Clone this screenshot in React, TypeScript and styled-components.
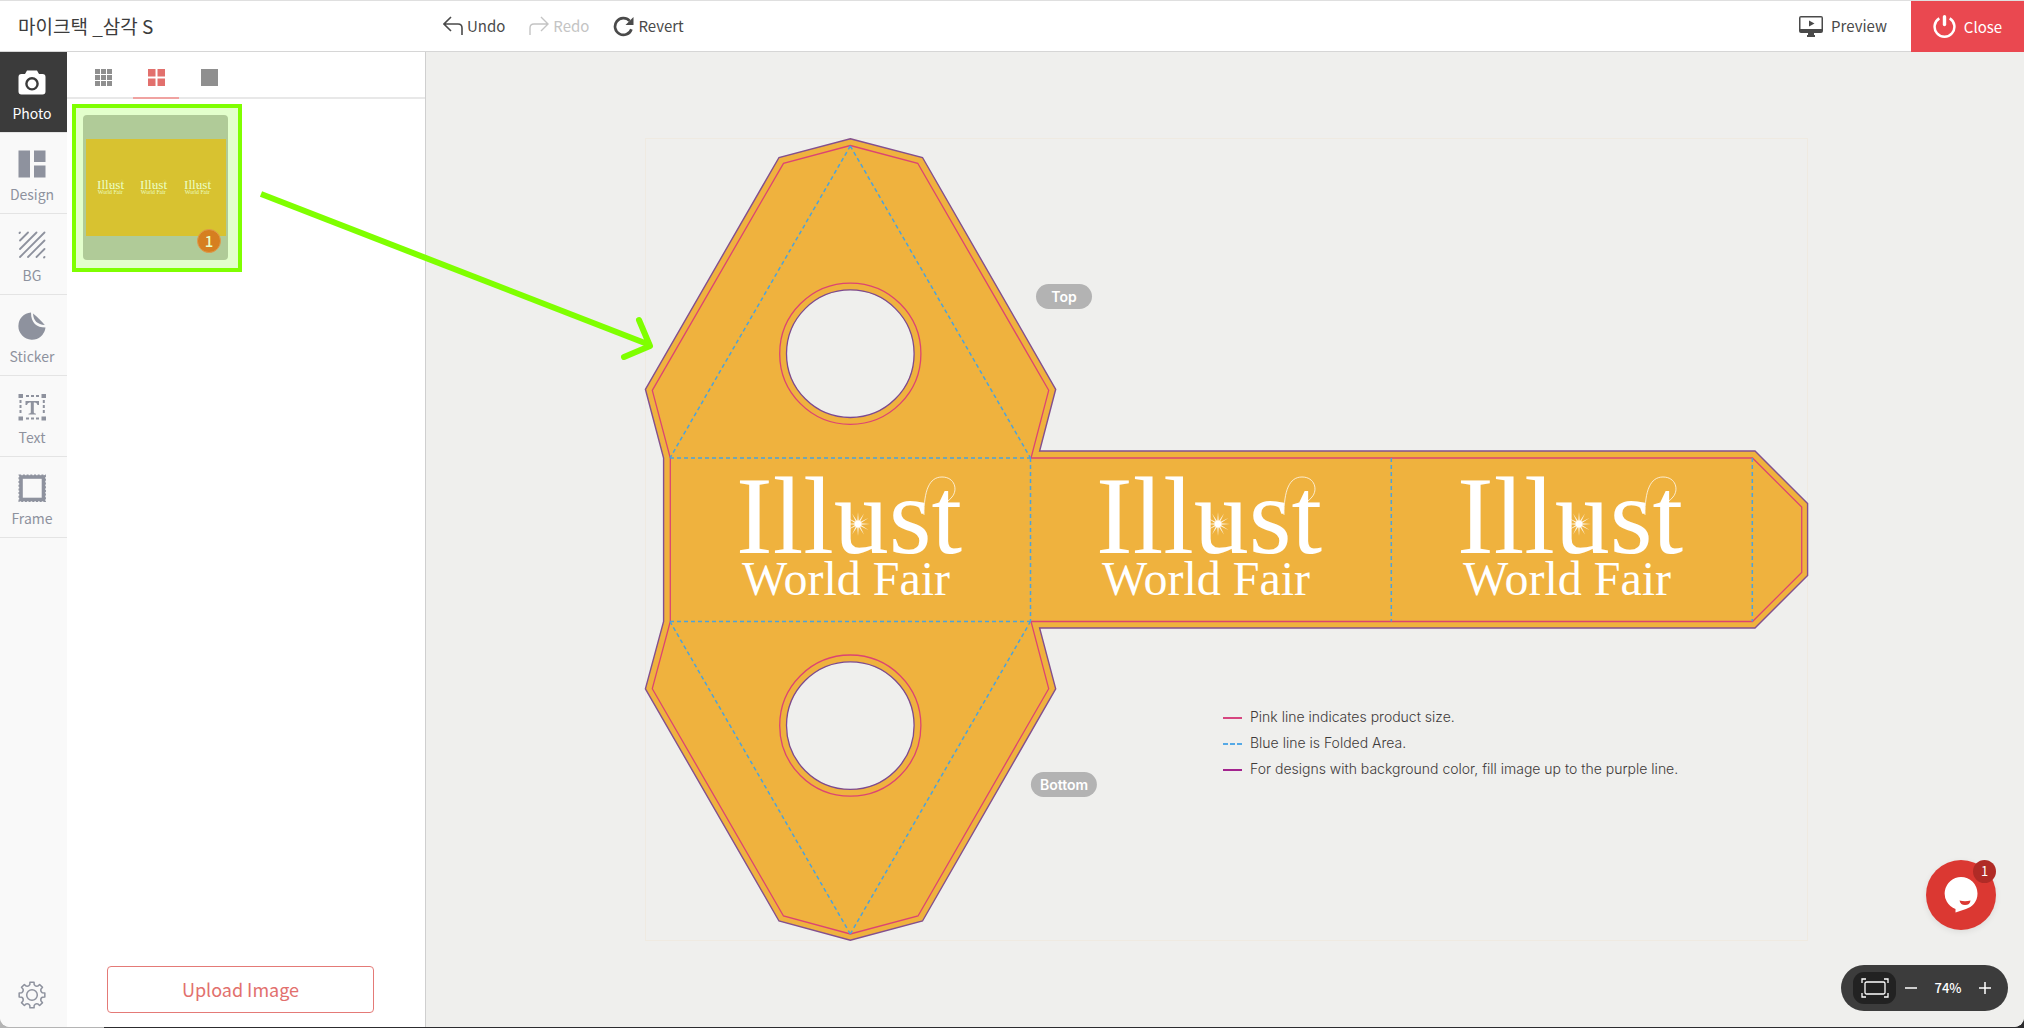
import React from "react";
import styled, { createGlobalStyle } from "styled-components";

const GlobalStyle = createGlobalStyle`
  *, *::before, *::after { box-sizing: border-box; }
  body {
    margin: 0;
    background: linear-gradient(to right, #b4b4b4 104px, #2c2c2e 104px);
    font-family: "Noto Sans CJK KR", "Noto Sans", sans-serif;
  }
  button { font: inherit; border: 0; padding: 0; background: none; cursor: pointer; color: inherit; }
  svg { display: block; flex: none; }
`;

const Window = styled.div`
  display: flex;
  flex-direction: column;
  height: 100vh;
  border-bottom: 1px solid transparent;
  background: #fff;
  background-clip: padding-box;
  border-radius: 0 0 10px 10px;
  overflow: hidden;
`;

const Header = styled.header`
  display: flex;
  align-items: stretch;
  flex: none;
  height: 52px;
  border-top: 1px solid #dfdfdf;
  border-bottom: 1px solid #d6d6d6;
  background: #fff;
  color: #4a4a4a;
  font-size: 15px;
  line-height: 24px;
`;

const Title = styled.h1`
  width: 443px;
  margin: 0;
  padding-left: 18px;
  align-self: center;
  font-size: 19px;
  font-weight: 400;
  line-height: 24px;
  color: #3c3c3c;
`;

const History = styled.div`
  display: flex;
  gap: 24px;
  flex: 1;
`;

const ToolButton = styled.button<{ $gap?: number }>`
  display: flex;
  align-items: center;
  gap: ${(p) => p.$gap ?? 4}px;
  &:disabled { color: #c4c4c4; cursor: default; }
`;

const PreviewButton = styled(ToolButton)`
  padding-right: 24px;
`;

const CloseButton = styled(ToolButton)`
  width: 113px;
  margin-bottom: -1px;
  justify-content: center;
  background: #ea4850;
  color: #fff;
`;

const Body = styled.div`
  display: flex;
  flex: 1;
  min-height: 0;
`;

const Rail = styled.nav`
  display: flex;
  flex-direction: column;
  flex: none;
  width: 67px;
  background: #f9f9f9;
  color: #8e929e;
`;

const RailItem = styled.button<{ $active?: boolean }>`
  display: flex;
  flex-direction: column;
  align-items: center;
  gap: 4px;
  height: 81px;
  padding: 17px 3px 0 0;
  border-bottom: 1px solid #e4e4e4;
  font-size: 14px;
  line-height: 24px;
  background: ${(p) => (p.$active ? "#3b3b3b" : "transparent")};
  color: ${(p) => (p.$active ? "#fff" : "inherit")};
`;

const SettingsButton = styled.button`
  display: flex;
  justify-content: center;
  margin-top: auto;
  padding: 0 3px 18px 0;
`;

const Panel = styled.aside`
  display: flex;
  flex-direction: column;
  flex: none;
  width: 359px;
  border-right: 1px solid #cfcfcf;
  background: #fff;
`;

const Tabs = styled.div`
  display: flex;
  flex: none;
  gap: 7px;
  height: 47px;
  padding-left: 13px;
  border-bottom: 2px solid #e8e8e8;
`;

const Tab = styled.button<{ $active?: boolean }>`
  display: flex;
  justify-content: center;
  align-items: center;
  width: 46px;
  margin-bottom: -2px;
  padding-top: 8px;
  padding-bottom: 2px;
  border-bottom: 2px solid ${(p) => (p.$active ? "#f0a3a1" : "transparent")};
  color: ${(p) => (p.$active ? "#e2706d" : "#8f8f8f")};
`;

const Photos = styled.div`
  flex: 1;
  padding: 5px;
`;

const Highlight = styled.div`
  width: 170px;
  height: 168px;
  padding: 7px 10px 8px 7px;
  border: 4px solid #7fff00;
  background: #e3ffcc;
`;

const Thumb = styled.button`
  position: relative;
  display: flex;
  align-items: center;
  justify-content: center;
  width: 145px;
  height: 145px;
  border-radius: 4px;
  background: #b0cb98;
`;

const UseCount = styled.span`
  position: absolute;
  right: 7px;
  bottom: 7px;
  width: 24px;
  height: 24px;
  border: 1px solid #e09a4c;
  border-radius: 50%;
  background: #d67f20;
  color: #eaffc8;
  font-size: 15px;
  font-weight: 500;
  line-height: 21px;
  text-align: center;
`;

const UploadArea = styled.div`
  display: flex;
  padding: 0 51px 14px 40px;
`;

const UploadButton = styled.button`
  flex: 1;
  height: 47px;
  padding-bottom: 2px;
  border: 1px solid #e47a77;
  border-radius: 4px;
  color: #e2706d;
  font-size: 18px;
  line-height: 24px;
`;

const Workspace = styled.main`
  position: relative;
  display: flex;
  flex: 1;
  min-width: 0;
  align-items: center;
  justify-content: center;
  background: #efefed;
`;

const Artboard = styled.div`
  position: relative;
  flex: none;
  > svg { overflow: visible; }
`;

const SideLabel = styled.span<{ $x: number; $y: number }>`
  position: absolute;
  left: ${(p) => p.$x}px;
  top: ${(p) => p.$y}px;
  transform: translateX(-50%);
  min-width: 56px;
  padding: 0 9px;
  border-radius: 13px;
  background: #b3b3b3;
  color: #fff;
  font: 600 14px/25px Inter, sans-serif;
  text-align: center;
`;

const Legend = styled.ul`
  position: absolute;
  left: 581px;
  top: 567px;
  margin: 0;
  padding: 0;
  list-style: none;
  white-space: nowrap;
  color: #3e3a39;
  font: 300 14px/26px Inter, sans-serif;
`;

const LegendRow = styled.li`
  display: flex;
  align-items: center;
  gap: 8px;
`;

const ArrowLayer = styled.svg`
  position: absolute;
  left: -166px;
  top: 136px;
  z-index: 2;
  pointer-events: none;
`;

const Floating = styled.div`
  position: absolute;
  right: 16px;
  bottom: 16px;
  display: flex;
  flex-direction: column;
  align-items: flex-end;
  gap: 35px;
`;

const ChatButton = styled.button`
  position: relative;
  display: flex;
  align-items: center;
  justify-content: center;
  width: 70px;
  height: 70px;
  margin-right: 12px;
  border-radius: 50%;
  background: #db3832;
  box-shadow: 0 2px 6px rgba(0, 0, 0, 0.08);
`;

const ChatCount = styled.span`
  position: absolute;
  top: 0;
  right: 0;
  width: 23px;
  height: 23px;
  border-radius: 50%;
  background: #b02b26;
  color: #fff;
  font-size: 13px;
  line-height: 21px;
`;

const ZoomBar = styled.div`
  display: flex;
  align-items: center;
  width: 167px;
  height: 46px;
  padding: 0 8px 0 12px;
  border-radius: 23px;
  background: #3c3c3c;
  color: #fff;
  font-size: 13px;
  font-weight: 500;
  line-height: 20px;
`;

const FitButton = styled.button`
  display: flex;
  align-items: center;
  justify-content: center;
  width: 43px;
  height: 32px;
  border-radius: 11px;
  background: #222;
`;

const ZoomStep = styled.button`
  display: flex;
  align-items: center;
  justify-content: center;
  width: 30px;
  height: 32px;
`;

const ZoomValue = styled.output`
  flex: 1;
  text-align: center;
`;

const RAYS = [0, 30, 60, 90, 120, 150, 180, 210, 240, 270, 300, 330];

/* One lettering block; its origin is the left end of the "Illust" baseline. */
function Lettering({ x, y, scale = 1, color = "#fff" }: { x: number; y: number; scale?: number; color?: string }) {
  return (
    <g transform={`translate(${x} ${y}) scale(${scale})`} fill={color} fontFamily="'Liberation Serif', serif">
      <text fontSize="110">
        Illust
        <tspan x="6" y="42" fontSize="48">World Fair</tspan>
      </text>
      <g transform="translate(122 -29)">
        {RAYS.map((a) => (
          <path key={a} d="M-1 0L0 -12L1 0Z" transform={`rotate(${a})`} opacity=".85" />
        ))}
        <circle r="3.4" />
      </g>
      <path d="M188 -38C188 -62 193 -76 206 -76C219 -76 222 -63 216 -56C213 -52 209 -50 204 -49" fill="none" stroke={color} strokeWidth="1" opacity=".75" />
    </g>
  );
}

const CUT =
  "M850.3 145.5L917.7 163.3L1048.7 390.3L1031 458H1752.5L1801.7 507V572.5L1752.5 621.5H1031L1048.7 688.7L918 916L850.3 934L783.5 916L652.3 688.7L670.3 621.5V458L652.3 390.3L783.5 163.3Z";
const BLEED =
  "M850.3 138.7L922.5 157.5L1055.7 389.3L1039.6 451H1755L1807.6 503.6V575.4L1755 628H1039.6L1055.7 688.8L922.5 921L850.3 940.3L779 921L645.4 688.8L663.6 621.5V458L645.4 389.3L779 157.5Z";
const FOLDS = "M850.3 146L670 458M850.3 146L1030.5 458M670 458H1030.5M670 621.5H1030.5M850.3 934L670 621.5M850.3 934L1030.5 621.5M1030.5 458V621.5M1391.3 458V621.5M1752.3 458V621.5";

function Dieline() {
  return (
    <svg width="1166" height="806" viewBox="642 137 1166 806" role="img" aria-label="Mic tag template">
      <rect x="645.5" y="138.5" width="1162" height="802" fill="none" stroke="#efeae1" />
      <path d={BLEED} fill="#efb23e" stroke="#83508f" strokeWidth="1.4" />
      {[353.7, 725.6].map((cy) => (
        <g key={cy} fill="none" strokeWidth="1.3">
          <circle cx="850.3" cy={cy} r="70.6" stroke="#dc4472" />
          <circle cx="850.3" cy={cy} r="63.8" fill="#efefed" stroke="#7d4a90" />
        </g>
      ))}
      <path d={CUT} fill="none" stroke="#dc4472" strokeWidth="1.3" />
      <path d={FOLDS} fill="none" stroke="#4ba3dc" strokeWidth="1.5" strokeDasharray="4 3" />
      {[736, 1096, 1457].map((x) => (
        <Lettering key={x} x={x} y={553} />
      ))}
    </svg>
  );
}

function PhotoArt() {
  return (
    <svg width="140" height="97" viewBox="0 0 140 97" role="img" aria-label="Illust World Fair artwork">
      <rect width="140" height="97" fill="#d8c230" />
      {[11, 54, 98].map((x) => (
        <Lettering key={x} x={x} y={50} scale={0.12} color="#ebffc4" />
      ))}
    </svg>
  );
}

const UndoIcon = () => (
  <svg width="20" height="20" viewBox="0 0 20 20" fill="none" stroke="currentColor" strokeWidth="1.6">
    <path d="M8 1L1 8L8 15M1 8H15Q19 8 19 12V19" />
  </svg>
);
const RedoIcon = () => (
  <svg width="20" height="20" viewBox="0 0 20 20" fill="none" stroke="currentColor" strokeWidth="1.4">
    <path d="M12 1L19 8L12 15M19 8H5Q1 8 1 12V19" />
  </svg>
);
const RevertIcon = () => (
  <svg width="21" height="21" viewBox="0 0 21 21" fill="none">
    <path d="M18.4 13.2A8.4 8.4 0 1 1 16.6 4.8" stroke="currentColor" strokeWidth="2.7" />
    <path d="M20.5 1V9H12.5Z" fill="currentColor" />
  </svg>
);
const PreviewIcon = () => (
  <svg width="24" height="21" viewBox="0 0 24 21">
    <path fill="currentColor" fillRule="evenodd" d="M2 0H22Q24 0 24 2V15Q24 17 22 17H15V19H16V21H8V19H9V17H2Q0 17 0 15V2Q0 0 2 0ZM1.5 1.5V13H22.5V1.5Z" />
    <path d="M10 4.5L15.5 7.5L10 10.5Z" fill="currentColor" />
  </svg>
);
const PowerIcon = () => (
  <svg width="23" height="23" viewBox="0 0 23 23" fill="none" stroke="currentColor">
    <path d="M6.3 3.4A9.9 9.9 0 1 0 16.7 3.4" strokeWidth="2.5" />
    <path d="M11.5 1.8V9.6" strokeWidth="3.4" strokeLinecap="round" />
  </svg>
);

const railIcon = { width: 28, height: 28, viewBox: "0 0 28 28", fill: "currentColor" };
const CameraIcon = () => (
  <svg {...railIcon}>
    <path fillRule="evenodd" d="M9 1.5H19L21 5H24.5Q27.5 5 27.5 8V22.5Q27.5 25.5 24.5 25.5H3.5Q.5 25.5 .5 22.5V8Q.5 5 3.5 5H7ZM14 8A6.8 6.8 0 1 0 14 21.6A6.8 6.8 0 1 0 14 8ZM14 10.4A4.4 4.4 0 1 1 14 19.2A4.4 4.4 0 1 1 14 10.4Z" />
  </svg>
);
const DesignIcon = () => (
  <svg {...railIcon}>
    <path d="M.5 .5H12V27.5H.5ZM16 .5H27.5V12H16ZM16 15.5H27.5V27.5H16Z" />
  </svg>
);
const BgIcon = () => (
  <svg {...railIcon} stroke="currentColor" strokeWidth="1.8" strokeLinecap="round">
    <path d="M1.5 2L2 1.5M2 9.5L10 1.5M2 18L18.5 1.5M2 26L26.5 1.5M10 26L26.5 9.5M18.5 26L26.5 18M26 26.5L26.5 26" />
  </svg>
);
const StickerIcon = () => (
  <svg {...railIcon}>
    <path d="M13 .5A13.6 13.6 0 1 0 27.5 15.5C18.5 15.5 13 11 13 .5Z" />
    <path d="M15 1.5C19 4.5 23.5 9 26.8 13C19.5 12.5 15.5 9 15 1.5Z" />
  </svg>
);
const TextIcon = () => (
  <svg {...railIcon}>
    <path d="M.5 1H5V5H.5ZM23.5 1H28V5H23.5ZM.5 23.5H5V27.5H.5ZM23.5 23.5H28V27.5H23.5Z" />
    <path d="M8 3H21M8 25.5H21M2.5 7V22M25.8 7V22" fill="none" stroke="currentColor" strokeWidth="2" strokeDasharray="3 2" />
    <path d="M7.5 8H21V12H19.5Q19 9.5 17 9.5H15.8V19.5Q15.8 20.5 18 20.8V21.5H10.5V20.8Q12.8 20.5 12.8 19.5V9.5H11.5Q9.5 9.5 9 12H7.5Z" />
  </svg>
);
const FrameIcon = () => (
  <svg {...railIcon} fill="none" stroke="currentColor">
    <rect x="3" y="3" width="22.5" height="22.5" strokeWidth="3.6" />
    <rect x="1.2" y="1.2" width="26" height="26" strokeWidth="1.4" strokeDasharray="2 1.7" />
  </svg>
);

const GearIcon = () => {
  const teeth = [0, 45, 90, 135, 180, 225, 270, 315];
  const at = (deg: number, r: number) => {
    const a = ((deg - 90) * Math.PI) / 180;
    return `${(14 + r * Math.cos(a)).toFixed(2)} ${(14 + r * Math.sin(a)).toFixed(2)}`;
  };
  const d = teeth
    .map((t, i) => `${i ? "L" : "M"}${at(t - 12, 10.6)}L${at(t - 9, 13)}L${at(t + 9, 13)}L${at(t + 12, 10.6)}Q${at(t + 22.5, 9)} ${at(t + 33, 10.6)}`)
    .join("");
  return (
    <svg width="28" height="28" viewBox="0 0 28 28" fill="none" stroke="currentColor" strokeWidth="1.5" strokeLinejoin="round">
      <path d={`${d}Z`} />
      <circle cx="14" cy="14" r="5.3" />
    </svg>
  );
};

const GridIcon = ({ n }: { n: number }) => {
  const gap = n === 3 ? 1 : 2;
  const size = (17 - gap * (n - 1)) / n;
  const cells = Array.from({ length: n * n }, (_, i) => i);
  return (
    <svg width="17" height="17" viewBox="0 0 17 17" fill="currentColor">
      {cells.map((i) => (
        <rect key={i} x={(i % n) * (size + gap)} y={Math.floor(i / n) * (size + gap)} width={size} height={size} />
      ))}
    </svg>
  );
};

const LineSample = ({ color, dashed }: { color: string; dashed?: boolean }) => (
  <svg width="19" height="4" viewBox="0 0 19 4" fill="none" stroke={color} strokeWidth="2">
    <path d="M0 3H19" strokeDasharray={dashed ? "5 2" : undefined} />
  </svg>
);

const RAIL = [
  { label: "Photo", Icon: CameraIcon, active: true },
  { label: "Design", Icon: DesignIcon },
  { label: "BG", Icon: BgIcon },
  { label: "Sticker", Icon: StickerIcon },
  { label: "Text", Icon: TextIcon },
  { label: "Frame", Icon: FrameIcon },
];

export default function App() {
  return (
    <>
      <GlobalStyle />
      <Window>
        <Header>
          <Title>마이크택 _삼각 S</Title>
          <History>
            <ToolButton><UndoIcon />Undo</ToolButton>
            <ToolButton disabled><RedoIcon />Redo</ToolButton>
            <ToolButton><RevertIcon />Revert</ToolButton>
          </History>
          <PreviewButton $gap={8}><PreviewIcon />Preview</PreviewButton>
          <CloseButton $gap={8}><PowerIcon />Close</CloseButton>
        </Header>
        <Body>
          <Rail>
            {RAIL.map(({ label, Icon, active }) => (
              <RailItem key={label} $active={active}><Icon />{label}</RailItem>
            ))}
            <SettingsButton aria-label="Settings"><GearIcon /></SettingsButton>
          </Rail>
          <Panel>
            <Tabs>
              <Tab aria-label="Small grid"><GridIcon n={3} /></Tab>
              <Tab aria-label="Medium grid" $active><GridIcon n={2} /></Tab>
              <Tab aria-label="Single"><GridIcon n={1} /></Tab>
            </Tabs>
            <Photos>
              <Highlight>
                <Thumb>
                  <PhotoArt />
                  <UseCount>1</UseCount>
                </Thumb>
              </Highlight>
            </Photos>
            <UploadArea>
              <UploadButton>Upload Image</UploadButton>
            </UploadArea>
          </Panel>
          <Workspace>
            <Artboard>
              <Dieline />
              <SideLabel $x={422} $y={147}>Top</SideLabel>
              <SideLabel $x={422} $y={635}>Bottom</SideLabel>
              <Legend>
                <LegendRow><LineSample color="#d6457f" />Pink line indicates product size.</LegendRow>
                <LegendRow><LineSample color="#55a9e6" dashed />Blue line is Folded Area.</LegendRow>
                <LegendRow><LineSample color="#a3238e" />For designs with background color, fill image up to the purple line.</LegendRow>
              </Legend>
            </Artboard>
            <ArrowLayer width="400" height="180" viewBox="260 188 400 180" fill="none" stroke="#7fff00" strokeWidth="6">
              <path d="M261 194L650 345" />
              <path d="M639 320L650 346L624 357" strokeLinecap="round" strokeLinejoin="round" />
            </ArrowLayer>
            <Floating>
              <ChatButton aria-label="Chat">
                <svg width="34" height="36" viewBox="0 0 34 36">
                  <path d="M17 0A16.5 16.5 0 0 1 33.5 16.5C33.5 25 28 30 22 32L11.5 35.5V32A16.5 16.5 0 0 1 17 0Z" fill="#fff" />
                  <path d="M15.5 23.5Q21 25 26.5 23.5Q26 28 21 28Q16.5 28 15.5 23.5Z" fill="#db3832" />
                </svg>
                <ChatCount>1</ChatCount>
              </ChatButton>
              <ZoomBar>
                <FitButton aria-label="Fit to screen">
                  <svg width="28" height="20" viewBox="0 0 28 20" fill="none" stroke="#fff" strokeWidth="1.3">
                    <rect x="4" y="4" width="20" height="12" rx="1.5" />
                    <path d="M1 5V1H5M23 1H27V5M27 15V19H23M5 19H1V15" />
                  </svg>
                </FitButton>
                <ZoomStep aria-label="Zoom out">
                  <svg width="12" height="12" viewBox="0 0 12 12" stroke="#fff" strokeWidth="1.5"><path d="M0 6H12" /></svg>
                </ZoomStep>
                <ZoomValue>74%</ZoomValue>
                <ZoomStep aria-label="Zoom in">
                  <svg width="12" height="12" viewBox="0 0 12 12" stroke="#fff" strokeWidth="1.5"><path d="M0 6H12M6 0V12" /></svg>
                </ZoomStep>
              </ZoomBar>
            </Floating>
          </Workspace>
        </Body>
      </Window>
    </>
  );
}
